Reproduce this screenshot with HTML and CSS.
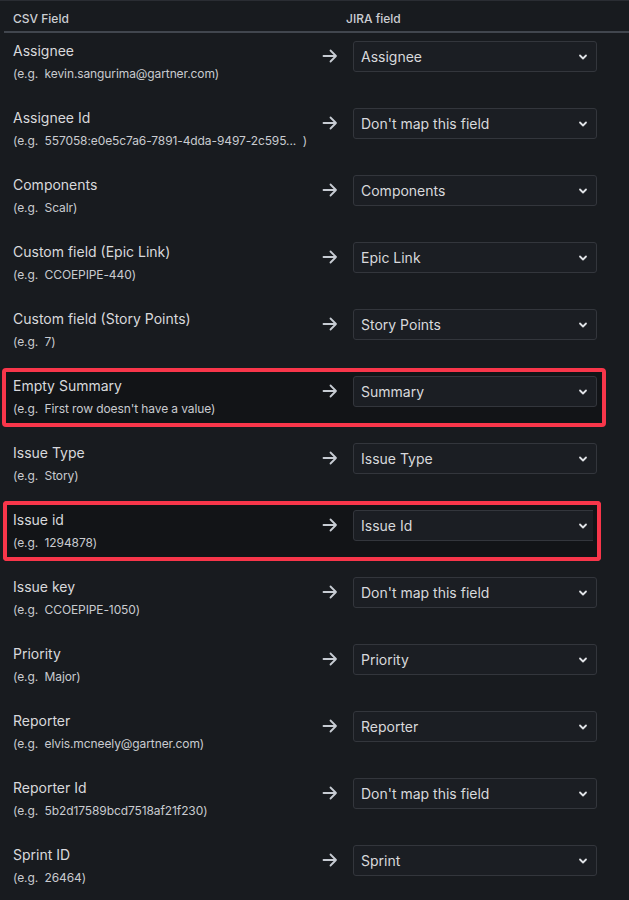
FILE: index.html
```html
<!DOCTYPE html>
<html>
<head>
<meta charset="utf-8">
<link rel="stylesheet" href="styles.css">
</head>
<body>
<div class="page">
  <div class="head">
    <div class="head-csv">CSV Field</div>
    <div class="head-jira">JIRA field</div>
  </div>
  <div class="rows">
    <div class="row">
      <div class="csv"><div class="name">Assignee</div><div class="ex">(e.g.&nbsp; kevin.sangurima@gartner.com)</div></div>
      <div class="arrow"><svg width="16" height="14" viewBox="0 0 16 14"><path d="M1.5 7H14M8.5 1.5L14 7L8.5 12.5" fill="none" stroke="#c7ccd3" stroke-width="1.8" stroke-linecap="round" stroke-linejoin="round"/></svg></div>
      <div class="select"><span>Assignee</span><svg class="chev" width="10" height="8" viewBox="0 0 10 8"><path d="M2 2.5L5 5.5L8 2.5" fill="none" stroke="#e0e2e6" stroke-width="1.8" stroke-linecap="round" stroke-linejoin="round"/></svg></div>
    </div>
    <div class="row">
      <div class="csv"><div class="name">Assignee Id</div><div class="ex">(e.g.&nbsp; 557058:e0e5c7a6-7891-4dda-9497-2c595...&nbsp; )</div></div>
      <div class="arrow"><svg width="16" height="14" viewBox="0 0 16 14"><path d="M1.5 7H14M8.5 1.5L14 7L8.5 12.5" fill="none" stroke="#c7ccd3" stroke-width="1.8" stroke-linecap="round" stroke-linejoin="round"/></svg></div>
      <div class="select"><span>Don't map this field</span><svg class="chev" width="10" height="8" viewBox="0 0 10 8"><path d="M2 2.5L5 5.5L8 2.5" fill="none" stroke="#e0e2e6" stroke-width="1.8" stroke-linecap="round" stroke-linejoin="round"/></svg></div>
    </div>
    <div class="row">
      <div class="csv"><div class="name">Components</div><div class="ex">(e.g.&nbsp; Scalr)</div></div>
      <div class="arrow"><svg width="16" height="14" viewBox="0 0 16 14"><path d="M1.5 7H14M8.5 1.5L14 7L8.5 12.5" fill="none" stroke="#c7ccd3" stroke-width="1.8" stroke-linecap="round" stroke-linejoin="round"/></svg></div>
      <div class="select"><span>Components</span><svg class="chev" width="10" height="8" viewBox="0 0 10 8"><path d="M2 2.5L5 5.5L8 2.5" fill="none" stroke="#e0e2e6" stroke-width="1.8" stroke-linecap="round" stroke-linejoin="round"/></svg></div>
    </div>
    <div class="row">
      <div class="csv"><div class="name">Custom field (Epic Link)</div><div class="ex">(e.g.&nbsp; CCOEPIPE-440)</div></div>
      <div class="arrow"><svg width="16" height="14" viewBox="0 0 16 14"><path d="M1.5 7H14M8.5 1.5L14 7L8.5 12.5" fill="none" stroke="#c7ccd3" stroke-width="1.8" stroke-linecap="round" stroke-linejoin="round"/></svg></div>
      <div class="select"><span>Epic Link</span><svg class="chev" width="10" height="8" viewBox="0 0 10 8"><path d="M2 2.5L5 5.5L8 2.5" fill="none" stroke="#e0e2e6" stroke-width="1.8" stroke-linecap="round" stroke-linejoin="round"/></svg></div>
    </div>
    <div class="row">
      <div class="csv"><div class="name">Custom field (Story Points)</div><div class="ex">(e.g.&nbsp; 7)</div></div>
      <div class="arrow"><svg width="16" height="14" viewBox="0 0 16 14"><path d="M1.5 7H14M8.5 1.5L14 7L8.5 12.5" fill="none" stroke="#c7ccd3" stroke-width="1.8" stroke-linecap="round" stroke-linejoin="round"/></svg></div>
      <div class="select"><span>Story Points</span><svg class="chev" width="10" height="8" viewBox="0 0 10 8"><path d="M2 2.5L5 5.5L8 2.5" fill="none" stroke="#e0e2e6" stroke-width="1.8" stroke-linecap="round" stroke-linejoin="round"/></svg></div>
    </div>
    <div class="row flagged flag-a">
      <div class="csv"><div class="name">Empty Summary</div><div class="ex">(e.g.&nbsp; First row doesn't have a value)</div></div>
      <div class="arrow"><svg width="16" height="14" viewBox="0 0 16 14"><path d="M1.5 7H14M8.5 1.5L14 7L8.5 12.5" fill="none" stroke="#c7ccd3" stroke-width="1.8" stroke-linecap="round" stroke-linejoin="round"/></svg></div>
      <div class="select"><span>Summary</span><svg class="chev" width="10" height="8" viewBox="0 0 10 8"><path d="M2 2.5L5 5.5L8 2.5" fill="none" stroke="#e0e2e6" stroke-width="1.8" stroke-linecap="round" stroke-linejoin="round"/></svg></div>
    </div>
    <div class="row">
      <div class="csv"><div class="name">Issue Type</div><div class="ex">(e.g.&nbsp; Story)</div></div>
      <div class="arrow"><svg width="16" height="14" viewBox="0 0 16 14"><path d="M1.5 7H14M8.5 1.5L14 7L8.5 12.5" fill="none" stroke="#c7ccd3" stroke-width="1.8" stroke-linecap="round" stroke-linejoin="round"/></svg></div>
      <div class="select"><span>Issue Type</span><svg class="chev" width="10" height="8" viewBox="0 0 10 8"><path d="M2 2.5L5 5.5L8 2.5" fill="none" stroke="#e0e2e6" stroke-width="1.8" stroke-linecap="round" stroke-linejoin="round"/></svg></div>
    </div>
    <div class="row flagged flag-b">
      <div class="csv"><div class="name">Issue id</div><div class="ex">(e.g.&nbsp; 1294878)</div></div>
      <div class="arrow"><svg width="16" height="14" viewBox="0 0 16 14"><path d="M1.5 7H14M8.5 1.5L14 7L8.5 12.5" fill="none" stroke="#c7ccd3" stroke-width="1.8" stroke-linecap="round" stroke-linejoin="round"/></svg></div>
      <div class="select"><span>Issue Id</span><svg class="chev" width="10" height="8" viewBox="0 0 10 8"><path d="M2 2.5L5 5.5L8 2.5" fill="none" stroke="#e0e2e6" stroke-width="1.8" stroke-linecap="round" stroke-linejoin="round"/></svg></div>
    </div>
    <div class="row">
      <div class="csv"><div class="name">Issue key</div><div class="ex">(e.g.&nbsp; CCOEPIPE-1050)</div></div>
      <div class="arrow"><svg width="16" height="14" viewBox="0 0 16 14"><path d="M1.5 7H14M8.5 1.5L14 7L8.5 12.5" fill="none" stroke="#c7ccd3" stroke-width="1.8" stroke-linecap="round" stroke-linejoin="round"/></svg></div>
      <div class="select"><span>Don't map this field</span><svg class="chev" width="10" height="8" viewBox="0 0 10 8"><path d="M2 2.5L5 5.5L8 2.5" fill="none" stroke="#e0e2e6" stroke-width="1.8" stroke-linecap="round" stroke-linejoin="round"/></svg></div>
    </div>
    <div class="row">
      <div class="csv"><div class="name">Priority</div><div class="ex">(e.g.&nbsp; Major)</div></div>
      <div class="arrow"><svg width="16" height="14" viewBox="0 0 16 14"><path d="M1.5 7H14M8.5 1.5L14 7L8.5 12.5" fill="none" stroke="#c7ccd3" stroke-width="1.8" stroke-linecap="round" stroke-linejoin="round"/></svg></div>
      <div class="select"><span>Priority</span><svg class="chev" width="10" height="8" viewBox="0 0 10 8"><path d="M2 2.5L5 5.5L8 2.5" fill="none" stroke="#e0e2e6" stroke-width="1.8" stroke-linecap="round" stroke-linejoin="round"/></svg></div>
    </div>
    <div class="row">
      <div class="csv"><div class="name">Reporter</div><div class="ex">(e.g.&nbsp; elvis.mcneely@gartner.com)</div></div>
      <div class="arrow"><svg width="16" height="14" viewBox="0 0 16 14"><path d="M1.5 7H14M8.5 1.5L14 7L8.5 12.5" fill="none" stroke="#c7ccd3" stroke-width="1.8" stroke-linecap="round" stroke-linejoin="round"/></svg></div>
      <div class="select"><span>Reporter</span><svg class="chev" width="10" height="8" viewBox="0 0 10 8"><path d="M2 2.5L5 5.5L8 2.5" fill="none" stroke="#e0e2e6" stroke-width="1.8" stroke-linecap="round" stroke-linejoin="round"/></svg></div>
    </div>
    <div class="row">
      <div class="csv"><div class="name">Reporter Id</div><div class="ex">(e.g.&nbsp; 5b2d17589bcd7518af21f230)</div></div>
      <div class="arrow"><svg width="16" height="14" viewBox="0 0 16 14"><path d="M1.5 7H14M8.5 1.5L14 7L8.5 12.5" fill="none" stroke="#c7ccd3" stroke-width="1.8" stroke-linecap="round" stroke-linejoin="round"/></svg></div>
      <div class="select"><span>Don't map this field</span><svg class="chev" width="10" height="8" viewBox="0 0 10 8"><path d="M2 2.5L5 5.5L8 2.5" fill="none" stroke="#e0e2e6" stroke-width="1.8" stroke-linecap="round" stroke-linejoin="round"/></svg></div>
    </div>
    <div class="row">
      <div class="csv"><div class="name">Sprint ID</div><div class="ex">(e.g.&nbsp; 26464)</div></div>
      <div class="arrow"><svg width="16" height="14" viewBox="0 0 16 14"><path d="M1.5 7H14M8.5 1.5L14 7L8.5 12.5" fill="none" stroke="#c7ccd3" stroke-width="1.8" stroke-linecap="round" stroke-linejoin="round"/></svg></div>
      <div class="select"><span>Sprint</span><svg class="chev" width="10" height="8" viewBox="0 0 10 8"><path d="M2 2.5L5 5.5L8 2.5" fill="none" stroke="#e0e2e6" stroke-width="1.8" stroke-linecap="round" stroke-linejoin="round"/></svg></div>
    </div>
  </div>
</div>
</body>
</html>
```

FILE: styles.css
```css
html, body {
  margin: 0;
  padding: 0;
  background: #181b1f;
}
body {
  font-family: Inter, "Noto Sans", sans-serif;
  color: #d8d9dc;
  width: 629px;
  height: 900px;
  overflow: hidden;
  border-top: 1px solid #2a2d33;
  box-sizing: border-box;
}
.page {
  display: flex;
  flex-direction: column;
}
.head {
  display: flex;
  margin-left: 4px;
  height: 32px;
  box-sizing: border-box;
  align-items: center;
  border-bottom: 2px solid #41464e;
  font-size: 12px;
  font-weight: 500;
  color: #ccced3;
  padding-top: 5px;
  padding-bottom: 1px;
}
.head-csv {
  padding-left: 9px;
  width: 333px;
}
.rows {
  display: flex;
  flex-direction: column;
}
.row {
  position: relative;
  display: grid;
  grid-template-columns: 309px 31px 244px;
  height: 67px;
  padding-left: 13px;
  box-sizing: border-box;
}
.csv {
  padding-top: 9px;
  position: relative;
  z-index: 1;
}
.name {
  font-size: 14px;
  line-height: 18px;
  color: #d8d9dc;
}
.ex {
  margin-top: 6px;
  font-size: 12px;
  line-height: 16px;
  color: #c9cbd0;
  white-space: nowrap;
  letter-spacing: -0.1px;
}
.arrow {
  padding-top: 16px;
  position: relative;
  z-index: 1;
}
.arrow svg { display: block; }
.select {
  position: relative;
  z-index: 1;
  margin-top: 8px;
  height: 31px;
  box-sizing: border-box;
  border: 1px solid #33363c;
  border-radius: 3px;
  background: #1b1e23;
  display: flex;
  align-items: center;
  justify-content: space-between;
  padding: 0 8px 0 7px;
  font-size: 14px;
  color: #d8d9dc;
}
.chev { display: block; }
.flagged::before {
  content: "";
  position: absolute;
  border: 4px solid #f8364a;
  border-radius: 4px;
  background: #121417;
  z-index: 0;
}
.flag-a::before {
  left: 2px;
  top: 0;
  width: 604px;
  height: 59px;
  box-sizing: border-box;
}
.flag-b::before {
  left: 3px;
  top: -1px;
  width: 598px;
  height: 60px;
  box-sizing: border-box;
}
.flag-b .select {
  clip-path: inset(-2px 4px -2px -2px);
}
.flag-b::after {
  content: "";
  position: absolute;
  left: 3px;
  top: -1px;
  width: 598px;
  height: 60px;
  box-sizing: border-box;
  border: 4px solid #f8364a;
  border-radius: 4px;
  z-index: 2;
  pointer-events: none;
}
```
